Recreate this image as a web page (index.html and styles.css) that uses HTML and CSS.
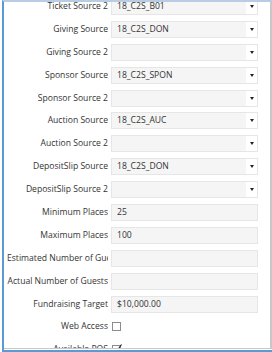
FILE: index.html
```html
<!DOCTYPE html>
<html>
<head>
<meta charset="utf-8">
<title>Event Details</title>
<link rel="stylesheet" href="styles.css">
</head>
<body>
<div class="win">
	<div class="panel">
		<div class="form">
			<div class="row"><label class="lbl">Ticket Source 2</label><div class="box combo"><span class="val">18_C2S_B01</span><span class="drop"><i class="caret"></i></span></div></div>
			<div class="row"><label class="lbl">Giving Source</label><div class="box combo"><span class="val">18_C2S_DON</span><span class="drop"><i class="caret"></i></span></div></div>
			<div class="row"><label class="lbl">Giving Source 2</label><div class="box combo"><span class="val"></span><span class="drop"><i class="caret"></i></span></div></div>
			<div class="row"><label class="lbl">Sponsor Source</label><div class="box combo"><span class="val">18_C2S_SPON</span><span class="drop"><i class="caret"></i></span></div></div>
			<div class="row"><label class="lbl">Sponsor Source 2</label><div class="box combo"><span class="val"></span><span class="drop"><i class="caret"></i></span></div></div>
			<div class="row"><label class="lbl">Auction Source</label><div class="box combo"><span class="val">18_C2S_AUC</span><span class="drop"><i class="caret"></i></span></div></div>
			<div class="row"><label class="lbl">Auction Source 2</label><div class="box combo"><span class="val"></span><span class="drop"><i class="caret"></i></span></div></div>
			<div class="row"><label class="lbl">DepositSlip Source</label><div class="box combo"><span class="val">18_C2S_DON</span><span class="drop"><i class="caret"></i></span></div></div>
			<div class="row"><label class="lbl">DepositSlip Source 2</label><div class="box combo"><span class="val"></span><span class="drop"><i class="caret"></i></span></div></div>
			<div class="row"><label class="lbl">Minimum Places</label><div class="box"><span class="val">25</span></div></div>
			<div class="row"><label class="lbl">Maximum Places</label><div class="box"><span class="val">100</span></div></div>
			<div class="row"><label class="lbl">Estimated Number of Guests</label><div class="box"><span class="val"></span></div></div>
			<div class="row"><label class="lbl">Actual Number of Guests</label><div class="box"><span class="val"></span></div></div>
			<div class="row"><label class="lbl">Fundraising Target</label><div class="box"><span class="val">$10,000.00</span></div></div>
			<div class="row"><label class="lbl">Web Access</label><div class="chk"><span class="tick"></span></div></div>
			<div class="row"><label class="lbl">Available POS</label><div class="chk"><span class="tick on"><svg width="9" height="9" viewBox="0 0 9 9"><path d="M1.5 5 L3.5 7.5 L8.5 0.5" fill="none" stroke="#222" stroke-width="1.1"/></svg></span></div></div>
		</div>
	</div>
</div>
</body>
</html>
```

FILE: styles.css
```css
*{margin:0;padding:0;box-sizing:border-box;}
html,body{width:272px;height:352px;overflow:hidden;background:#fff;}
body{font:8.6px/1 "Open Sans","Noto Sans",sans-serif;color:#333;}
.win{
	margin-left:2px;
	height:352px;
	border-left:2px solid #5b9bd5;
	border-top:2px solid #b8cde4;
	border-bottom:2px solid #5b9bd5;
	display:flex;
	flex-direction:column;
}
.panel{
	flex:1;
	border-right:2px solid #c8c8c8;
	border-bottom:1px solid #c8c8c8;
	margin-bottom:1px;
	overflow:hidden;
}
.form{
	margin-top:-4px;
	display:flex;
	flex-direction:column;
	gap:5.9px;
}
.row{
	display:grid;
	grid-template-columns:104px 147px;
	column-gap:3px;
	height:17px;
	align-items:center;
}
.lbl{
	padding-left:3px;
	text-align:right;
	white-space:nowrap;
	overflow:hidden;
	line-height:17px;
}
.box{
	height:17px;
	background:#f5f5f5;
	border:1px solid #e6e6e6;
	display:flex;
	align-items:center;
}
.val{flex:1;padding-left:5px;line-height:15px;}
.drop{
	width:11px;
	height:15px;
	background:#fff;
	display:flex;
	align-items:center;
	justify-content:center;
}
.caret{
	width:0;height:0;
	border-left:2px solid transparent;
	border-right:2px solid transparent;
	border-top:3px solid #222;
}
.chk{display:flex;align-items:center;padding-left:1px;}
.tick{
	width:9px;height:9px;
	border:1px solid #8c8c8c;
	background:#fff;
	position:relative;
}
.tick svg{position:absolute;left:0;top:-2px;}
```
